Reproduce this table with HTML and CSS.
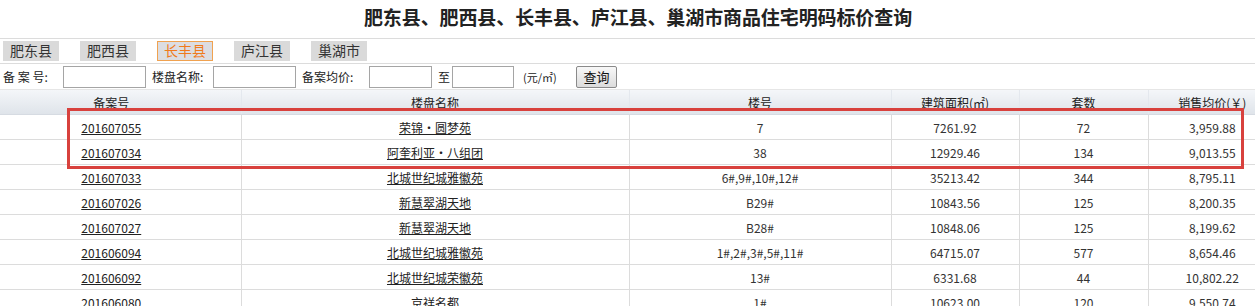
FILE: index.html
```html
<!DOCTYPE html>
<html lang="zh-CN">
<head>
<meta charset="utf-8">
<title>商品住宅明码标价查询</title>
<link rel="stylesheet" href="styles.css">
</head>
<body>
<div class="page">
  <h1 class="title">肥东县、肥西县、长丰县、庐江县、巢湖市商品住宅明码标价查询</h1>
  <div class="tabs">
    <span class="tab">肥东县</span>
    <span class="tab">肥西县</span>
    <span class="tab active">长丰县</span>
    <span class="tab">庐江县</span>
    <span class="tab">巢湖市</span>
  </div>
  <div class="search">
    <span class="lbl lbl1">备 案 号:</span>
    <input class="inp w83" type="text">
    <span class="lbl lbl2">楼盘名称:</span>
    <input class="inp w83" type="text">
    <span class="lbl lbl3">备案均价:</span>
    <input class="inp w63" type="text">
    <span class="lbl lbl4">至</span>
    <input class="inp w62" type="text">
    <span class="lbl lbl5">(元/㎡)</span>
    <button class="btn" type="button">查询</button>
  </div>
  <div class="grid-wrap">
    <table class="grid">
      <colgroup>
        <col class="c1"><col class="c2"><col class="c3"><col class="c4"><col class="c5"><col class="c6">
      </colgroup>
      <thead>
        <tr><th>备案号</th><th>楼盘名称</th><th>楼号</th><th>建筑面积(㎡)</th><th>套数</th><th>销售均价(￥)</th></tr>
      </thead>
      <tbody>
        <tr><td><a href="#">201607055</a></td><td><a href="#">荣锦·圆梦苑</a></td><td>7</td><td>7261.92</td><td>72</td><td>3,959.88</td></tr>
        <tr><td><a href="#">201607034</a></td><td><a href="#">阿奎利亚·八组团</a></td><td>38</td><td>12929.46</td><td>134</td><td>9,013.55</td></tr>
        <tr><td><a href="#">201607033</a></td><td><a href="#">北城世纪城雅徽苑</a></td><td>6#,9#,10#,12#</td><td>35213.42</td><td>344</td><td>8,795.11</td></tr>
        <tr><td><a href="#">201607026</a></td><td><a href="#">新慧翠湖天地</a></td><td>B29#</td><td>10843.56</td><td>125</td><td>8,200.35</td></tr>
        <tr><td><a href="#">201607027</a></td><td><a href="#">新慧翠湖天地</a></td><td>B28#</td><td>10848.06</td><td>125</td><td>8,199.62</td></tr>
        <tr><td><a href="#">201606094</a></td><td><a href="#">北城世纪城雅徽苑</a></td><td>1#,2#,3#,5#,11#</td><td>64715.07</td><td>577</td><td>8,654.46</td></tr>
        <tr><td><a href="#">201606092</a></td><td><a href="#">北城世纪城荣徽苑</a></td><td>13#</td><td>6331.68</td><td>44</td><td>10,802.22</td></tr>
        <tr><td><a href="#">201606080</a></td><td><a href="#">京祥名都</a></td><td>1#</td><td>10623.00</td><td>120</td><td>9,550.74</td></tr>
      </tbody>
    </table>
    <div class="highlight"></div>
  </div>
</div>
</body>
</html>
```

FILE: styles.css
```css
html, body {
  margin: 0;
  padding: 0;
  background: #fff;
  overflow: hidden;
}
.page {
  width: 1276px;
  font-family: "Noto Sans CJK SC", "Noto Sans", sans-serif;
  font-size: 12px;
  color: #333;
}
.title {
  margin: 0;
  height: 38px;
  line-height: 33px;
  text-align: center;
  font-size: 19px;
  font-weight: bold;
  color: #222;
  border-bottom: 1px solid #dcdcdc;
  letter-spacing: -0.1px;
}
.tabs {
  display: flex;
  gap: 21px;
  padding: 2px 0 2px 3px;
  border-bottom: 1px solid #dcdcdc;
  height: 20px;
}
.tab {
  box-sizing: border-box;
  width: 56px;
  height: 20px;
  line-height: 19px;
  text-align: center;
  font-size: 14px;
  background: #dadada;
  color: #333;
}
.tab.active {
  color: #f07a1c;
  border: 1px solid #f0a250;
  background: #dcdde2;
  line-height: 17px;
}
.search {
  display: flex;
  align-items: center;
  height: 26px;
  border-bottom: 1px solid #e6e6e6;
  box-sizing: border-box;
}
.lbl {
  box-sizing: border-box;
  white-space: nowrap;
  font-size: 12px;
  color: #222;
}
.lbl1 { width: 63px; padding-left: 3px; }
.lbl2 { width: 67px; padding-left: 6px; }
.lbl3 { width: 73px; padding-left: 6px; }
.lbl4 { width: 20px; padding-left: 6px; }
.lbl5 { width: 62px; padding-left: 9px; font-size: 11px; }
.inp {
  box-sizing: border-box;
  height: 22px;
  margin: 0;
  padding: 0 2px;
  border: 1px solid #a5a5a5;
  background: #fff;
}
.w83 { width: 83px; }
.w63 { width: 63px; }
.w62 { width: 62px; }
.btn {
  box-sizing: border-box;
  width: 41px;
  height: 22px;
  margin: 0;
  padding: 0;
  font-family: inherit;
  font-size: 13px;
  color: #111;
  border: 1px solid #8a8a8a;
  border-radius: 2px;
  background: linear-gradient(#f8f8f8, #dcdcdc);
}
.grid-wrap {
  position: relative;
}
.grid {
  width: 1276px;
  table-layout: fixed;
  border-collapse: collapse;
}
.c1 { width: 241px; }
.c2 { width: 388px; }
.c3 { width: 262px; }
.c4 { width: 128px; }
.c5 { width: 129px; }
.c6 { width: 128px; }
.grid th {
  height: 24px;
  padding: 0;
  font-weight: normal;
  font-size: 12px;
  color: #222;
  background: linear-gradient(#f4f6f9, #dfe4ea);
  border-left: 1px solid #e4e8ee;
  border-bottom: 1px solid #d6dbe2;
  text-align: center;
}
.grid th:first-child { border-left: none; padding-right: 18px; }
.grid td {
  height: 24px;
  padding: 0;
  text-align: center;
  border-left: 1px solid #dcdcdc;
  border-bottom: 1px solid #dcdcdc;
  color: #333;
  white-space: nowrap;
}
.grid td:first-child { border-left: none; padding-right: 18px; }
.grid a {
  color: #222;
  text-decoration: underline;
}
.highlight {
  position: absolute;
  left: 67px;
  top: 18px;
  width: 1177px;
  height: 61px;
  box-sizing: border-box;
  border: 3px solid #d8413d;
  pointer-events: none;
}
```
